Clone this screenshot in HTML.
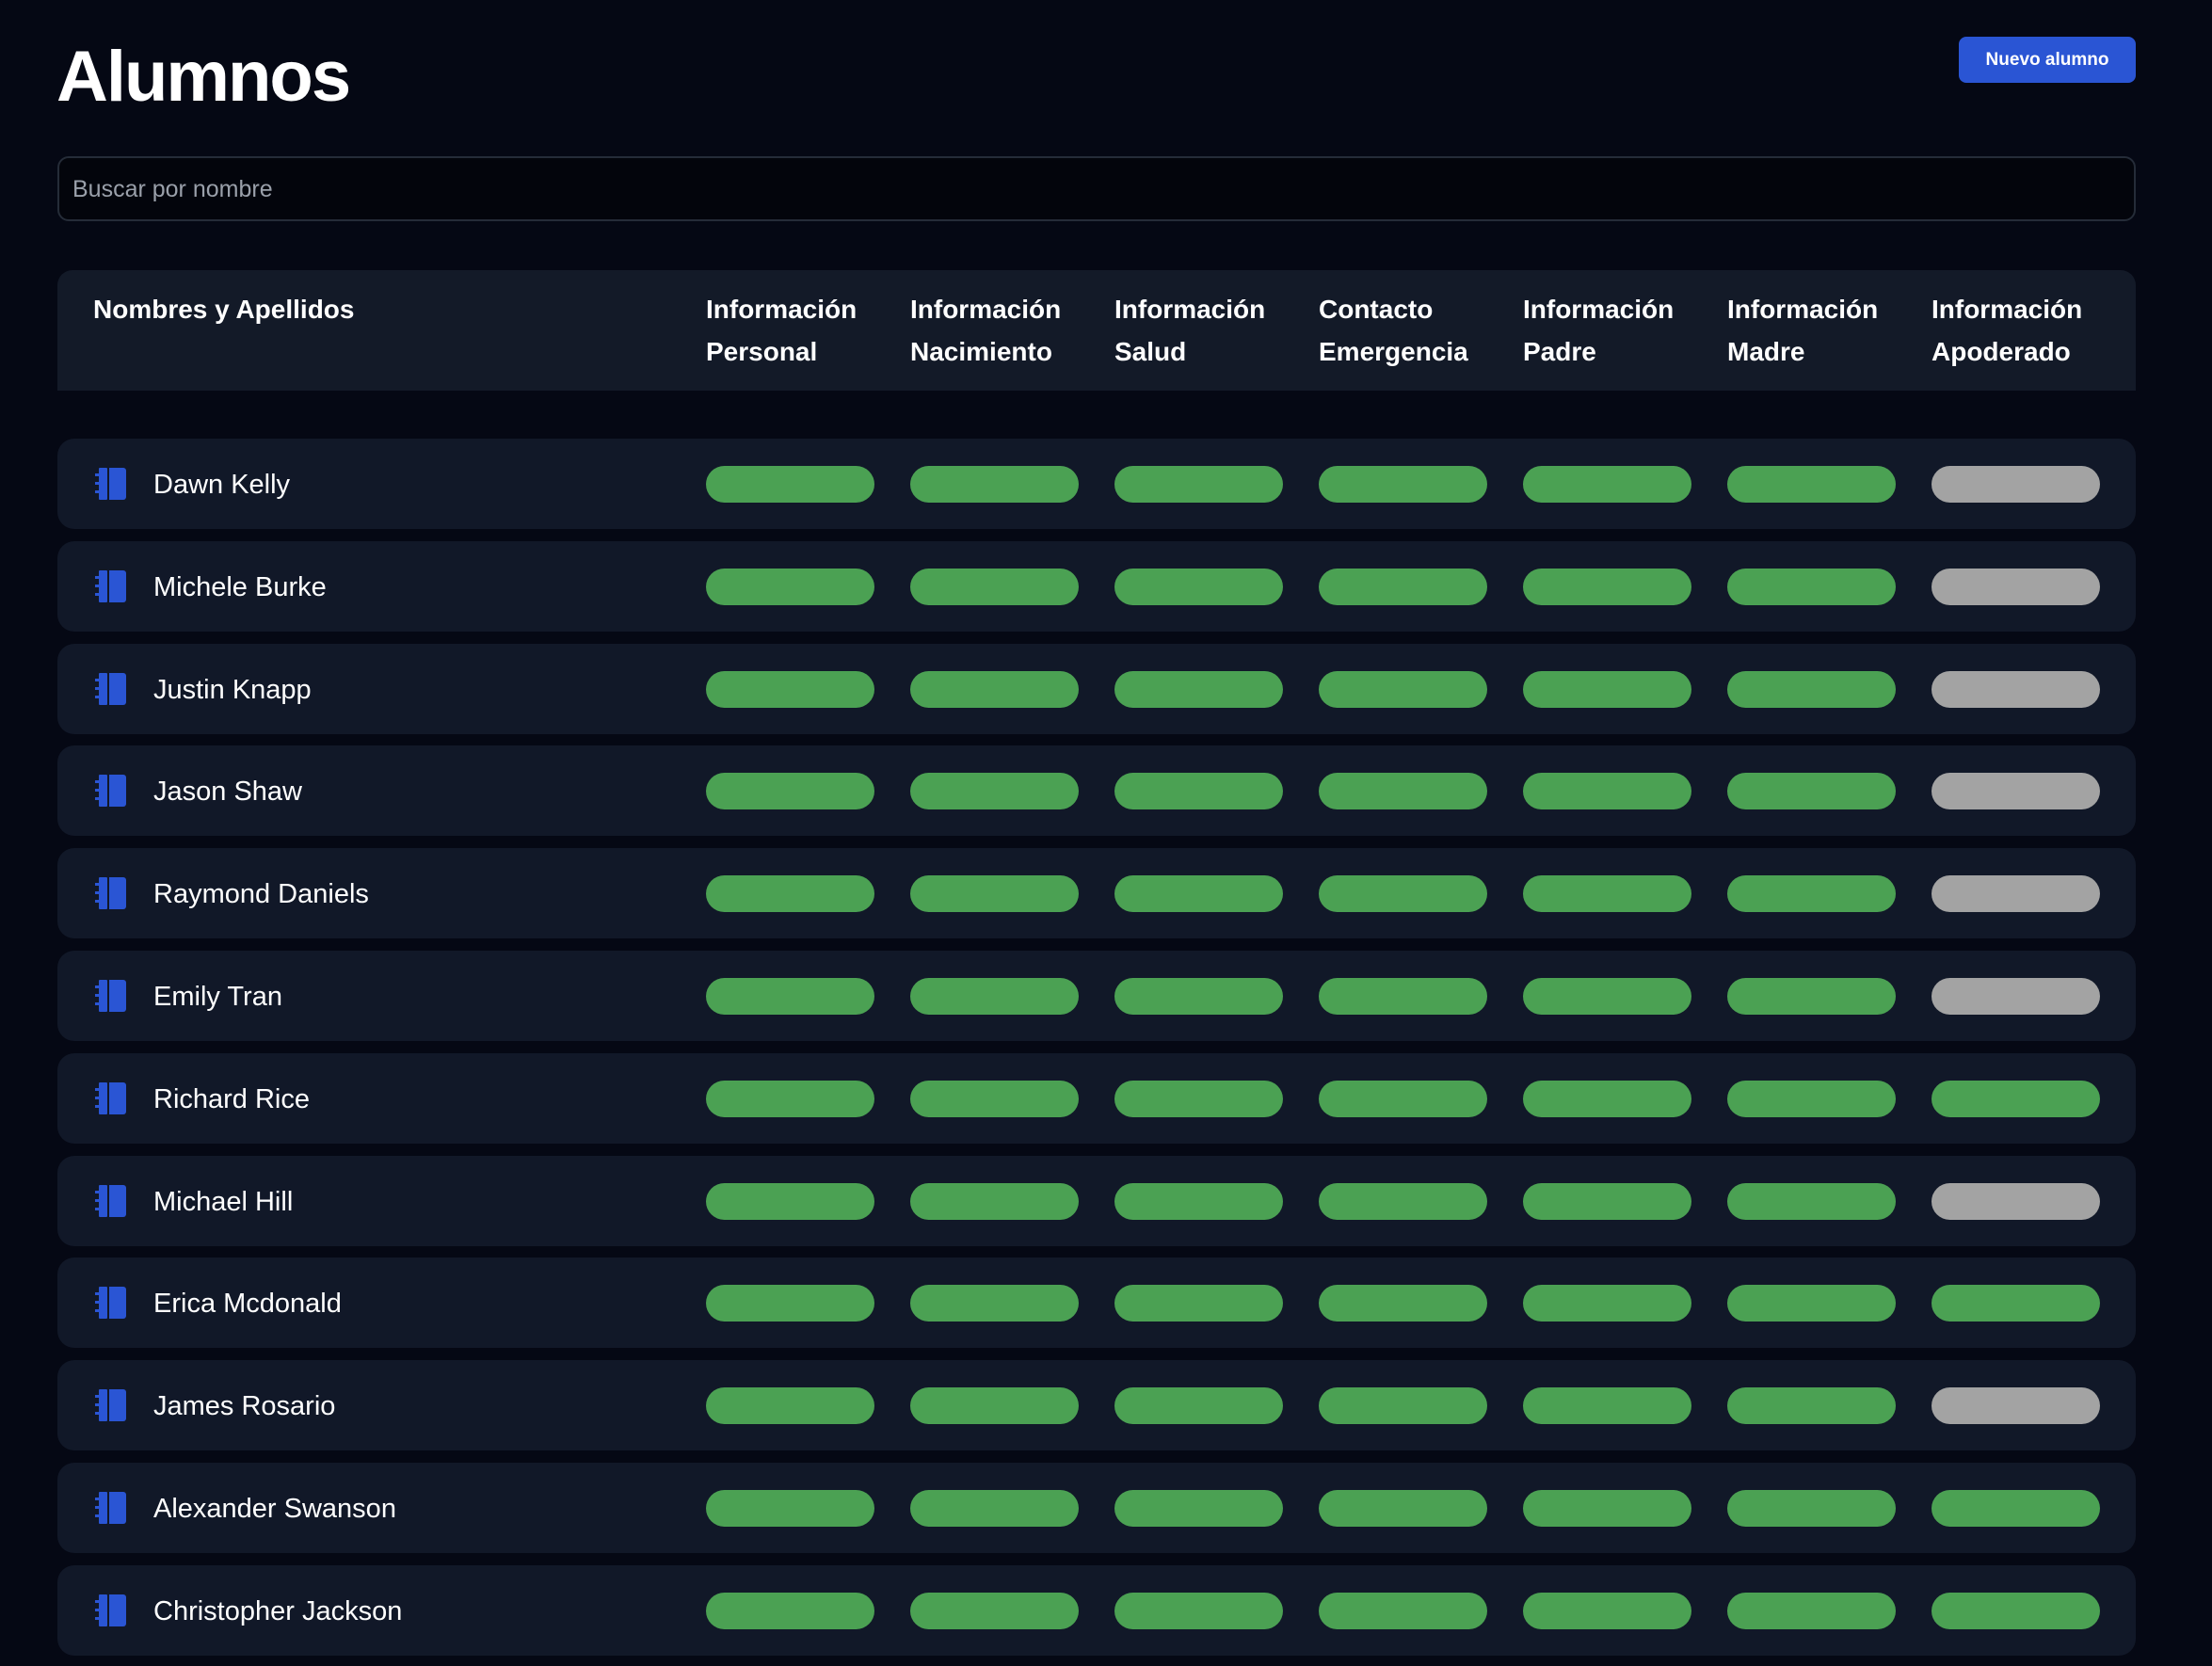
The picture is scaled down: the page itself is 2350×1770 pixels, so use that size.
<!DOCTYPE html>
<html><head><meta charset="utf-8"><style>
*{margin:0;padding:0;box-sizing:border-box}
body{width:2350px;height:1770px;background:#050814;font-family:"Liberation Sans",sans-serif;color:#fff;position:relative;overflow:hidden}
h1{position:absolute;left:60px;top:37px;font-size:76px;font-weight:700;letter-spacing:-2px;line-height:90px}
.btn{position:absolute;left:2081px;top:39px;width:188px;height:49px;background:#2a55d4;border-radius:8px;font-weight:700;font-size:19px;line-height:50px;text-align:center}
.search{position:absolute;left:61px;top:166px;width:2208px;height:69px;border:2px solid #252c38;border-radius:12px;background:#03050c;font-size:25px;color:#9aa0aa;line-height:67px;padding-left:14px}
.head{position:absolute;left:61px;top:287px;width:2208px;height:128px;background:#131a28;border-radius:16px 16px 0 0}
.hc{position:absolute;top:19px;font-weight:700;font-size:28px;line-height:45px}
.row{position:absolute;left:61px;width:2208px;height:96px;background:#111828;border-radius:18px}
.ic{position:absolute;left:40px;top:31px}
.nm{position:absolute;left:102px;top:1px;line-height:96px;font-size:29px}
.p{position:absolute;top:29px;width:179px;height:39px;border-radius:20px;background:#4ba153}
.g{background:#a3a3a3}
</style></head><body>
<h1>Alumnos</h1>
<div class="btn">Nuevo alumno</div>
<div class="search">Buscar por nombre</div>
<div class="head">
<div class="hc" style="left:38px">Nombres y Apellidos</div>
<div class="hc" style="left:689px">Información<br>Personal</div>
<div class="hc" style="left:906px">Información<br>Nacimiento</div>
<div class="hc" style="left:1123px">Información<br>Salud</div>
<div class="hc" style="left:1340px">Contacto<br>Emergencia</div>
<div class="hc" style="left:1557px">Información<br>Padre</div>
<div class="hc" style="left:1774px">Información<br>Madre</div>
<div class="hc" style="left:1991px">Información<br>Apoderado</div>
</div>
<div id="rows"></div>
<script>
var names=["Dawn Kelly","Michele Burke","Justin Knapp","Jason Shaw","Raymond Daniels","Emily Tran","Richard Rice","Michael Hill","Erica Mcdonald","James Rosario","Alexander Swanson","Christopher Jackson"];
var grey=[1,1,1,1,1,1,0,1,0,1,0,0];
var xs=[689,906,1123,1340,1557,1774,1991];
var icon='<svg class="ic" width="34" height="34" viewBox="0 0 34 34"><rect x="4" y="0" width="9" height="34" rx="1" fill="#2a55d4"/><rect x="0" y="6" width="5" height="3" fill="#2a55d4"/><rect x="0" y="15" width="5" height="3" fill="#2a55d4"/><rect x="0" y="24" width="5" height="3" fill="#2a55d4"/><path d="M15 0H30a3 3 0 0 1 3 3V31a3 3 0 0 1-3 3H15Z" fill="#2a55d4"/></svg>';
var h='';
for(var i=0;i<12;i++){
 var t=Math.round(466+i*108.8);
 h+='<div class="row" style="top:'+t+'px">'+icon+'<div class="nm">'+names[i]+'</div>';
 for(var j=0;j<7;j++){h+='<div class="p'+(j==6&&grey[i]?' g':'')+'" style="left:'+xs[j]+'px"></div>';}
 h+='</div>';
}
document.getElementById('rows').innerHTML=h;
</script>
</body></html>
